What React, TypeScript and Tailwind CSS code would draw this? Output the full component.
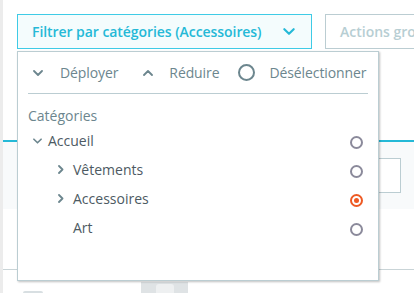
import React from 'react';

const ChevronDown: React.FC<{ className?: string; w?: number; h?: number }> = ({ className, w = 10, h = 6 }) => (
    <svg width={w} height={h} viewBox="0 0 10 6" className={className} fill="none">
        <path d="M1 1l4 4 4-4" stroke="currentColor" strokeWidth="1.8" strokeLinecap="round" strokeLinejoin="round" />
    </svg>
);

const ChevronUp: React.FC<{ className?: string }> = ({ className }) => (
    <svg width={10} height={6} viewBox="0 0 10 6" className={className} fill="none">
        <path d="M1 5l4-4 4 4" stroke="currentColor" strokeWidth="1.8" strokeLinecap="round" strokeLinejoin="round" />
    </svg>
);

const ChevronRight: React.FC<{ className?: string }> = ({ className }) => (
    <svg width={6} height={9} viewBox="0 0 6 9" className={className} fill="none">
        <path d="M1 1l3.5 3.5L1 8" stroke="currentColor" strokeWidth="1.8" strokeLinecap="round" strokeLinejoin="round" />
    </svg>
);

const Radio: React.FC<{ checked?: boolean }> = ({ checked }) =>
    checked ? (
        <span className="mt-[3px] flex h-[13px] w-[13px] items-center justify-center rounded-full border-2 border-[#ee5a24]">
            <span className="h-[5px] w-[5px] rounded-full bg-[#ee5a24]" />
        </span>
    ) : (
        <span className="mt-[3px] block h-[13px] w-[13px] rounded-full border-2 border-[#8b8a9b]" />
    );

interface TreeRowProps {
    label: string;
    level: 0 | 1;
    arrow?: 'down' | 'right';
    checked?: boolean;
}

const TreeRow: React.FC<TreeRowProps> = ({ label, level, arrow, checked }) => (
    <div className="flex h-[29px] items-center pr-[15px]">
        {level === 0 ? (
            <div className="flex items-center pl-[15px]">
                <ChevronDown w={9} h={6} className="text-[#6c868e]" />
                <span className="ml-[6px]">{label}</span>
            </div>
        ) : arrow ? (
            <div className="flex items-center pl-[40px]">
                <ChevronRight className="text-[#6c868e]" />
                <span className="ml-[9px]">{label}</span>
            </div>
        ) : (
            <span className="pl-[55px]">{label}</span>
        )}
        <div className="ml-auto">
            <Radio checked={checked} />
        </div>
    </div>
);

const CategoryDropdown: React.FC = () => (
    <div className="absolute left-[14px] top-[51px] h-[230px] w-[362px] border border-[#bbcdd2] bg-white shadow-[1px_1px_2px_rgba(0,0,0,0.25)]">
        <div className="flex h-[41px] items-center pl-[15px] text-[14px] tracking-[-0.1px] text-[#6c868e]">
            <ChevronDown />
            <span className="ml-[17px]">Déployer</span>
            <ChevronUp className="ml-[25px]" />
            <span className="ml-[16px]">Réduire</span>
            <span className="ml-[19px] block h-[17px] w-[17px] rounded-full border-2 border-[#6c868e]" />
            <span className="ml-[14px]">Désélectionner</span>
        </div>
        <div className="mx-[10px] h-px bg-[#bbcdd2]" />
        <div className="mt-[12px] pl-[10px] text-[14px] leading-[20px] text-[#6c868e]">Catégories</div>
        <div className="text-[14px] text-[#4d5a63]">
            <TreeRow label="Accueil" level={0} />
            <TreeRow label="Vêtements" level={1} arrow="right" />
            <TreeRow label="Accessoires" level={1} arrow="right" checked />
            <TreeRow label="Art" level={1} />
        </div>
    </div>
);

export default function App() {
    return (
        <div
            className="relative h-[293px] w-full overflow-hidden border-l-[3px] border-[#ececec] bg-white"
            style={{ fontFamily: '"Open Sans", "Liberation Sans", sans-serif' }}
        >
            <div className="flex gap-[13px] pl-[14px] pt-[14px]">
                <button className="flex h-[35px] w-[295px] shrink-0 items-center border border-[#3fcbe6] bg-[#f4fcfd] pl-[14px] pr-[15px] text-[14px] font-semibold tracking-[-0.06px] text-[#25b9d7]">
                    <span>Filtrer par catégories (Accessoires)</span>
                    <ChevronDown w={12} h={7} className="ml-auto mr-[1px]" />
                </button>
                <button className="flex h-[35px] w-[200px] shrink-0 items-center border border-[#bbcdd2] bg-white pl-[14px] text-[14px] font-semibold whitespace-nowrap text-[#b7ced3]">
                    Actions groupées
                </button>
            </div>

            <div className="mt-[91px] h-[2px] bg-[#25b9d7]" />
            <div className="flex h-[67px] bg-[#f8fafb] pt-[16px] pr-[13px]">
                <div className="ml-auto h-[35px] w-[200px] border border-[#bbcdd2] bg-white" />
            </div>
            <div className="mt-[60px] h-px bg-[#c9d4d7]" />
            <div className="relative flex h-[24px]">
                <div className="ml-[20px] mt-[21px] h-[3px] w-[20px] rounded-t-[2px] bg-[#d8dfe2]" />
                <div className="ml-[98px] mt-[12px] flex h-[12px] w-[47px] justify-center bg-[#dfe3e5]">
                    <div className="mt-[2px] h-[10px] w-[18px] rounded-t-[3px] bg-[#eef0f1]" />
                </div>
            </div>

            <CategoryDropdown />
        </div>
    );
}
